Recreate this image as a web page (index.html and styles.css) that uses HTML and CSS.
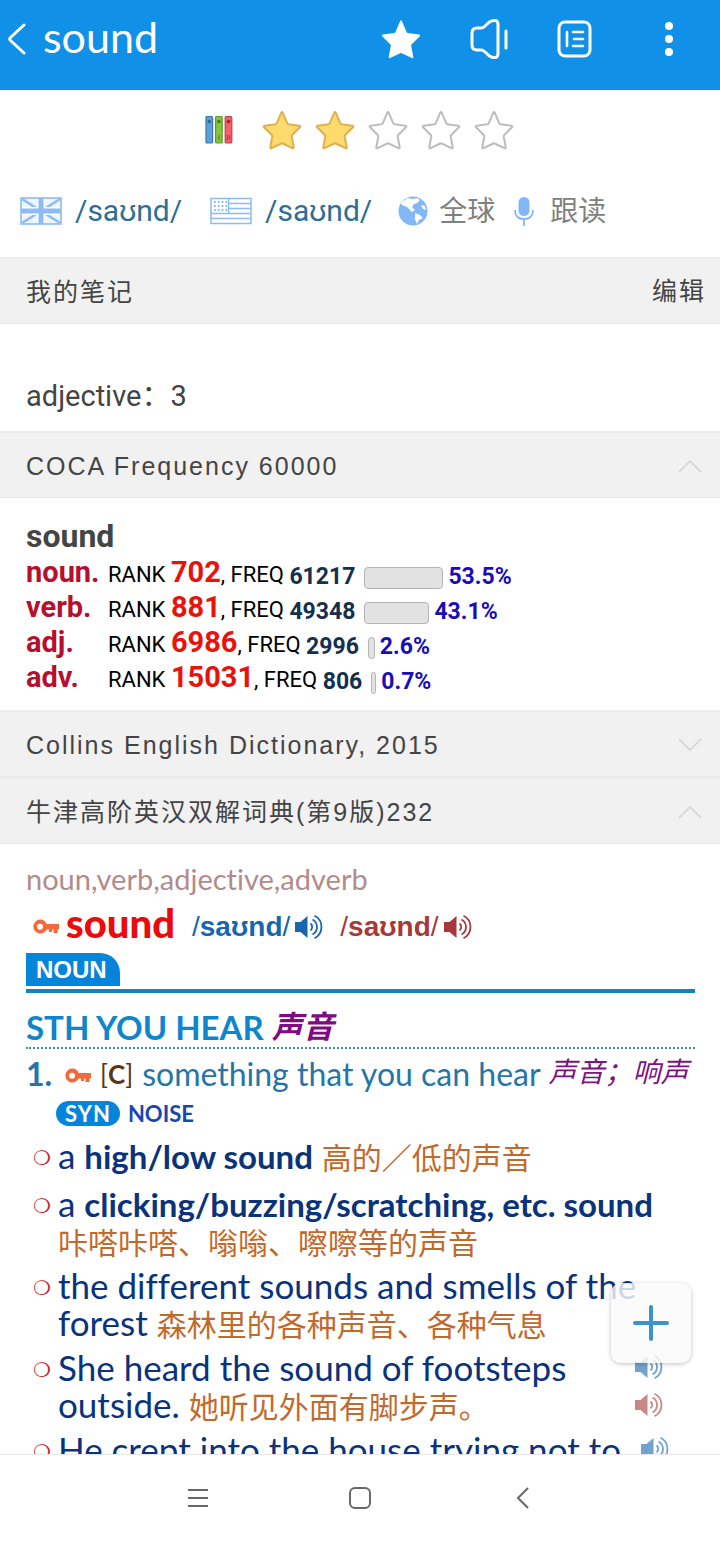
FILE: index.html
```html
<!DOCTYPE html>
<html lang="zh-CN">
<head>
<meta charset="utf-8">
<meta name="viewport" content="width=device-width, initial-scale=1">
<title>sound</title>
<link rel="stylesheet" href="styles.css">
</head>
<body>
<svg class="defs" aria-hidden="true">
  <symbol id="star" viewBox="0 0 40 40"><path stroke-linejoin="round" d="M20.700 2.700 25.400 13.600Q25.700 14.200 26.400 14.300L37.400 15.800Q39 16.100 37.900 17.300L30 25.300Q29.600 25.800 29.700 26.500L31.700 37.200Q31.900 38.900 30.400 38.200L20.700 33.500Q20 33.200 19.300 33.500L9.600 38.200Q8.100 38.900 8.300 37.200L10.300 26.500Q10.400 25.800 10 25.300L2.100 17.300Q1 16.100 2.600 15.800L13.600 14.300Q14.300 14.200 14.600 13.600L19.300 2.700Q20 1.400 20.700 2.700Z"/></symbol>
  <symbol id="speaker" viewBox="0 0 28 24"><path fill="currentColor" d="M0 7h5.500L12.500 1v22l-7-6H0z"/><g fill="none" stroke="currentColor" stroke-width="1.800"><path d="M15.500 8.500a4.500 4.500 0 0 1 0 7M17.500 4.500a8.500 8.500 0 0 1 0 15M19.500.8a12.500 12.500 0 0 1 0 22.400"/></g></symbol>
  <symbol id="key" viewBox="0 0 26 16"><path fill="#f4683c" fill-rule="evenodd" d="M7 .5a7 7 0 0 1 6.700 4.500H26v5.500h-1.500V14h-4v-3.500H19V13h-3v-2.500h-2.300A7 7 0 1 1 7 .5zm0 4.200a3 3 0 1 0 0 6 3 3 0 0 0 0-6z"/></symbol>
  <symbol id="up" viewBox="0 0 24 14"><path d="M1 13 12 2l11 11" fill="none" stroke="currentColor" stroke-width="1.400"/></symbol>
  <symbol id="down" viewBox="0 0 24 14"><path d="M1 1l11 11L23 1" fill="none" stroke="currentColor" stroke-width="1.400"/></symbol>
</svg>
<div class="app">
  <header class="topbar">
    <button class="plain back" aria-label="返回"><svg width="20" height="34" viewBox="0 0 20 34"><path d="M16 3 2.500 15.500q-1.500 1.500 0 3L16 31" fill="none" stroke="currentColor" stroke-width="3" stroke-linecap="round"/></svg></button>
    <h1 class="title">sound</h1>
    <nav class="actions">
      <button class="plain" aria-label="收藏"><svg class="fav" width="44" height="42"><use href="#star"/></svg></button>
      <button class="plain" aria-label="发音"><svg width="40" height="42" viewBox="0 0 40 42"><path d="M6 10h4q2 0 3.500-1.500l5-4.500q3-2 6.500-1.500 2 1 2 4v29q0 3-2 4-3.500.5-6.500-1.500l-5-4.500Q12 32 10 32H6q-5 0-5-5V15q0-5 5-5zM35 13v17" transform="translate(1)" fill="none" stroke="currentColor" stroke-width="3" stroke-linecap="round"/></svg></button>
      <button class="plain" aria-label="目录"><svg width="36" height="38" viewBox="0 0 36 38" fill="none" stroke="currentColor" stroke-linecap="round"><rect x="2" y="2" width="31" height="34" rx="6" stroke-width="3"/><path d="M10 12v14M16 12h10M17 19h9M16 26h10" stroke-width="2.600"/></svg></button>
      <button class="plain more" aria-label="更多"><svg width="10" height="36" fill="currentColor"><circle cx="5" cy="5" r="4"/><circle cx="5" cy="18" r="4"/><circle cx="5" cy="31" r="4"/></svg></button>
    </nav>
  </header>

  <div class="stage">
  <main class="content">
    <div class="rating" aria-label="2 / 5">
      <svg class="books" width="28" height="30" viewBox="0 0 28 30"><g stroke-width="1.200"><rect x="1" y="1.500" width="6.600" height="26.500" rx="1" fill="#56a1de" stroke="#3a78ad"/><rect x="10.600" y="1.500" width="6.600" height="26.500" rx="1" fill="#82c83e" stroke="#5d9b2d"/><rect x="20.200" y="1.500" width="6.600" height="26.500" rx="1" fill="#f0616a" stroke="#b8444c"/></g><circle cx="4.300" cy="6.500" r="1.800" fill="#2d6597"/><circle cx="13.900" cy="6.500" r="1.800" fill="#47791f"/><circle cx="23.500" cy="6.500" r="1.800" fill="#9d2430"/><path d="M14 20v5M22.500 20v5M24.700 20v5" stroke="#92343b" stroke-width=".8"/></svg>
      <svg class="star on"><use href="#star"/></svg><svg class="star on"><use href="#star"/></svg><svg class="star"><use href="#star"/></svg><svg class="star"><use href="#star"/></svg><svg class="star"><use href="#star"/></svg>
    </div>

    <div class="pron">
      <button class="plain ipa"><svg width="42" height="28" viewBox="0 0 42 28"><rect x="1" y="1" width="40" height="26" fill="#eef5ff"/><path d="M2 2l38 24M40 2L2 26" stroke="#8dbbf5" stroke-width="2.600"/><path d="M21 1v26M1 14h40" stroke="#fff" stroke-width="8"/><path d="M21 1v26M1 14h40" stroke="#8dbbf5" stroke-width="5"/><rect x="1" y="1" width="40" height="26" fill="none" stroke="#8dbbf5" stroke-width="1.600"/></svg>/saʊnd/</button>
      <button class="plain ipa us"><svg width="42" height="28" viewBox="0 0 42 28"><g fill="none" stroke="#8dbbf5"><rect x="1" y="1.500" width="40" height="25" stroke-width="1.500"/><path d="M19 6.500h22M19 11.500h22M1 16.500h40M1 21.500h40M18.500 2v14" stroke-width="1.500"/><path d="M4 5h13M4 9h13M4 13h13" stroke-width="1.800" stroke-dasharray="1.800 2"/></g></svg>/saʊnd/</button>
      <button class="plain say"><svg width="30" height="30" viewBox="0 0 30 30"><circle cx="15" cy="15" r="14.500" fill="#82b8f6"/><path d="M5 5l5-3 5 1 4-1 3 2-3 3-3 1-2 3 3 3-3 2-5-5-5-2-1-2zM17 17l5 2 3 3-4 2-2 4-2-5zM23 9l4 1 1 4-3-1z" fill="#fff"/></svg><span>全球</span></button>
      <button class="plain say mic"><svg width="20" height="30" viewBox="0 0 20 30"><rect x="4.500" y="1" width="11" height="19" rx="5.500" fill="#82b8f6"/><path d="M1 14q0 9 9 9t9-9M10 23v7" fill="none" stroke="#82b8f6" stroke-width="1.800"/></svg><span>跟读</span></button>
    </div>

    <section>
      <div class="bar notes"><h2>我的笔记</h2><button class="plain edit">编辑</button></div>
      <p class="note">adjective：3</p>
    </section>

    <section>
      <div class="bar"><h2>COCA Frequency 60000</h2><svg class="chev"><use href="#up"/></svg></div>
      <div class="freq">
        <h3>sound</h3>
        <dl>
          <dt>noun.</dt><dd>RANK <b class="rank">702</b>, FREQ <b class="count">61217</b><span class="meter" style="width:79px"></span><b class="pct">53.5%</b></dd>
          <dt>verb.</dt><dd>RANK <b class="rank">881</b>, FREQ <b class="count">49348</b><span class="meter" style="width:65px"></span><b class="pct">43.1%</b></dd>
          <dt>adj.</dt><dd>RANK <b class="rank">6986</b>, FREQ <b class="count">2996</b><span class="meter" style="width:7px"></span><b class="pct">2.6%</b></dd>
          <dt>adv.</dt><dd>RANK <b class="rank">15031</b>, FREQ <b class="count">806</b><span class="meter" style="width:5px"></span><b class="pct">0.7%</b></dd>
        </dl>
      </div>
    </section>

    <section>
      <div class="bar"><h2>Collins English Dictionary, 2015</h2><svg class="chev"><use href="#down"/></svg></div>
    </section>

    <section>
      <div class="bar"><h2>牛津高阶英汉双解词典(第9版)232</h2><svg class="chev"><use href="#up"/></svg></div>
      <article class="entry">
        <p class="classes">noun,verb,adjective,adverb</p>
        <div class="headword">
          <svg class="key"><use href="#key"/></svg><b class="word">sound</b>
          <button class="plain phon uk">/<b>saʊnd</b>/<svg class="spk"><use href="#speaker"/></svg></button>
          <button class="plain phon am">/<b>saʊnd</b>/<svg class="spk"><use href="#speaker"/></svg></button>
        </div>
        <div class="pos"><span>NOUN</span></div>
        <h3 class="sense">STH YOU HEAR <i>声音</i></h3>
        <div class="def"><b class="num">1.</b><svg class="key"><use href="#key"/></svg><span class="gram">[<b>C</b>]</span><span>something that you can hear</span><i>声音；响声</i></div>
        <div class="syn"><span class="tag">SYN</span><a href="#noise">NOISE</a></div>
        <ul class="examples">
          <li><p>a <b>high/low sound</b> <span class="zh">高的／低的声音</span></p></li>
          <li><p>a <b>clicking/buzzing/scratching, etc. sound</b> <span class="zh">咔嗒咔嗒、嗡嗡、嚓嚓等的声音</span></p></li>
          <li><p>the different sounds and smells of the forest <span class="zh">森林里的各种声音、各种气息</span></p></li>
          <li class="voiced"><p>She heard the sound of footsteps outside. <span class="zh">她听见外面有脚步声。</span></p><div class="voices"><button class="plain uk" aria-label="英音"><svg class="spk"><use href="#speaker"/></svg></button><button class="plain am" aria-label="美音"><svg class="spk"><use href="#speaker"/></svg></button></div></li>
          <li class="voiced last"><p>He crept into the house trying not to</p><div class="voices"><button class="plain uk" aria-label="英音"><svg class="spk"><use href="#speaker"/></svg></button></div></li>
        </ul>
      </article>
    </section>
  </main>
  <button class="plain fab" aria-label="添加"><svg width="36" height="36"><path d="M18 2v32M2 18h32" stroke="#3c93cb" stroke-width="4" stroke-linecap="round"/></svg></button>
  </div>

  <nav class="sysnav">
    <button class="plain" aria-label="菜单"><svg width="22" height="20"><path d="M1 2h20M1 10h20M1 18h20" stroke="currentColor" stroke-width="2"/></svg></button>
    <button class="plain" aria-label="主页"><svg width="24" height="24"><rect x="2" y="2" width="20" height="20" rx="5" fill="none" stroke="currentColor" stroke-width="2"/></svg></button>
    <button class="plain" aria-label="返回"><svg width="14" height="22"><path d="M13 1 3 11l10 10" fill="none" stroke="currentColor" stroke-width="2"/></svg></button>
  </nav>
</div>
</body>
</html>
```
FILE: styles.css
```css
* { box-sizing: border-box; }
body { margin: 0; background: #fff; color: #444; font-family: Roboto, "Noto Sans CJK SC", sans-serif; }
h1, h2, h3, p, dl, dd, ul { margin: 0; padding: 0; font-weight: 400; }
svg { flex: none; display: block; }
.defs { position: absolute; width: 0; height: 0; }
.plain { border: 0; padding: 0; margin: 0; background: none; color: inherit; font: inherit; display: flex; align-items: center; }
.app { height: 100vh; display: flex; flex-direction: column; }

.topbar { flex: none; height: 90px; padding: 0 46px 12px 8px; display: flex; align-items: center; background: #1190e7; color: #fff; }
.title { flex: 1; padding: 0 0 5px 15px; font: 43px/50px Lato, sans-serif; }
.actions { display: flex; align-items: center; gap: 47px; }
.fav { fill: currentColor; }
.more { margin-left: 24px; }

.stage { flex: 1; min-height: 0; position: relative; }
.content { height: 100%; overflow-y: auto; scrollbar-width: none; }
.rating { display: flex; justify-content: center; align-items: center; gap: 13px; height: 79px; padding-right: 2px; }
.books { margin-right: 16px; }
.star { width: 40px; height: 40px; fill: #fff; stroke: #bdbdbd; stroke-width: 2; overflow: visible; }
.star.on { fill: #ffdb6e; stroke: #e0b050; }
.pron { display: flex; align-items: center; height: 83px; padding: 0 20px; color: #808080; }
.ipa { gap: 13px; margin-right: 28px; font-size: 30px; color: #2e6f94; }
.us { margin-right: 26px; }
.say { gap: 11px; margin-right: 19px; font-size: 28px; }
.say span { padding-bottom: 4px; }
.mic { gap: 16px; }

.bar { display: flex; align-items: center; justify-content: space-between; height: 67px; padding: 1px 18px 0 26px; background: #f1f1f1; border-top: 2px solid #ececec; border-bottom: 1px solid #e8e8e8; }
.bar h2 { font: 25px/36px "Liberation Sans", "Noto Sans CJK SC", sans-serif; letter-spacing: 2px; }
.notes { margin-top: 5px; padding-right: 14px; }
.edit { padding-bottom: 6px; font-size: 25px; letter-spacing: 2px; }
.chev { width: 24px; height: 14px; color: #d0d0d0; }
.note { padding: 51px 26px 14px; font-size: 29px; line-height: 42px; }

.freq { padding: 19px 26px 15px; }
.freq h3 { font-size: 32px; line-height: 38px; font-weight: 700; }
.freq dl { display: grid; grid-template-columns: 82px 1fr; grid-auto-rows: 35px; }
.freq dt { font-size: 29px; line-height: 35px; font-weight: 700; color: #b5102e; }
.freq dd { display: flex; align-items: center; padding-top: 4px; white-space: pre; font-size: 22px; line-height: 31px; color: #000; }
.rank { margin-bottom: 4px; font-size: 29px; color: #e8140c; }
.count, .pct { margin-top: 4px; font-size: 23px; }
.count { color: #14304c; }
.meter { flex: none; height: 22px; margin: 6px 5px 0 9px; border: 1px solid #b4b4b4; border-radius: 4px; background: #e2e2e2; }
.pct { color: #1a0db8; }

.entry { padding: 17px 25px 0 26px; font-family: Lato, "Noto Sans CJK SC", sans-serif; font-variant-ligatures: none; }
.classes { font-size: 29px; line-height: 36px; color: #b38b8b; }
.headword { display: flex; align-items: center; height: 52px; padding: 8px 0 0 7px; }
.key { width: 26px; height: 16px; }
.word { margin: 0 17px 8px 7px; font-size: 40px; line-height: 44px; font-weight: 900; color: #ea0c0c; }
.phon { margin-right: 17px; font: 28px/34px "Liberation Sans", sans-serif; }
.phon .spk { margin-left: 5px; }
.spk { width: 28px; height: 24px; }
.uk { color: #1766af; }
.am { color: #a63a3a; }
.pos { border-bottom: 4px solid #1583bd; padding-bottom: 3px; margin-top: 4px; display: flex; }
.pos span { padding: 0 13px 0 10px; border-radius: 0 20px 0 0; background: #0585da; color: #fff; font: 700 24px/33px "Liberation Sans", sans-serif; }
.sense { margin-top: 14px; border-bottom: 2px dotted #3f8ba8; font-size: 33px; line-height: 40px; font-weight: 700; color: #0f86cc; }
.sense i { color: #800a80; font-size: 31px; line-height: 31px; vertical-align: 2px; }
.def { display: flex; align-items: center; padding-top: 2px; white-space: nowrap; font-size: 32px; line-height: 46px; color: #2576a8; }
.def .key { margin-top: 4px; }
.def i { margin: 0 0 6px 8px; font-size: 28px; line-height: 38px; color: #7c1482; }
.num { width: 39px; }
.gram { margin: 0 9px; font-size: 26px; color: #5c3515; }
.syn { display: flex; align-items: center; gap: 8px; margin-top: 2px; padding-left: 30px; height: 28px; font-size: 22px; font-weight: 700; }
.tag { padding: 0 9px; border-radius: 13px; background: #0585da; color: #fff; line-height: 25px; letter-spacing: 1px; }
.syn a { color: #1747b0; text-decoration: none; }
.examples { list-style: none; padding-top: 10px; font-size: 35px; line-height: 37px; color: #0a337c; }
.examples li { display: flex; padding-left: 7px; margin-bottom: 8px; }
.examples li::before { content: "❍"; flex: none; width: 25px; color: #c81e28; font: 20px/42px "DejaVu Sans", sans-serif; height: 37px; }
.examples li:first-child { margin-bottom: 11px; }
.examples p { flex: 1; min-width: 0; }
.examples b { font-size: 33px; line-height: 33px; }
.zh { font-size: 30px; line-height: 30px; word-break: keep-all; color: #c26a2c; }
.voices { display: flex; flex-direction: column; gap: 14px; padding: 6px 32px 0 0; opacity: .6; }
.last .voices { padding-right: 26px; }

.fab { position: absolute; right: 29px; bottom: 91px; width: 80px; height: 80px; justify-content: center; border-radius: 10px; background: rgba(250, 250, 250, .82); box-shadow: 0 1px 4px rgba(0, 0, 0, .25); }
.sysnav { flex: none; height: 87px; display: grid; grid-template-columns: repeat(3, 162px); justify-content: center; justify-items: center; border-top: 1px solid #e6e6e6; color: #686868; }
```
